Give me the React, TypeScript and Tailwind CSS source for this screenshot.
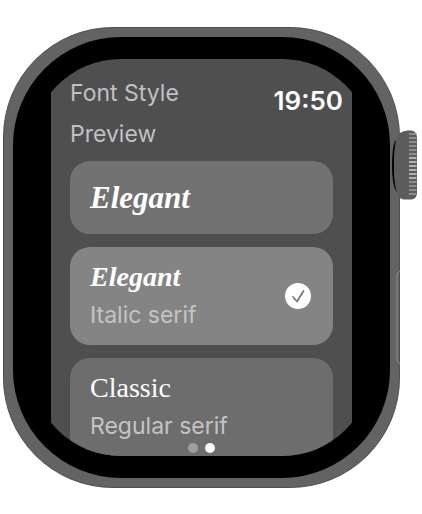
import React, { useState } from 'react';

const styles = [
  { id: 'elegant', name: 'Elegant', detail: 'Italic serif', font: 'font-bold italic' },
  { id: 'classic', name: 'Classic', detail: 'Regular serif', font: 'font-normal' },
];

const ridges = Array.from({ length: 16 }, (_, i) => 13 + i * 4);

function Crown() {
  return (
    <svg className="absolute top-[94px] -right-[18px]" width="30" height="250" viewBox="0 0 30 250" fill="none" aria-hidden="true">
      {/* Crown body, with its shadow against the case */}
      <path d="M8 20C5 27 5 37 5 45s0 18 4 25" stroke="#000" strokeWidth="2" />
      <path d="M12 12c3-2 7-2.500 11-2.500 4 0 6 4 6 8v54c0 4-2 7-6 7h-7c-8 0-10-16-10-33 0-16 1-30 6-33.500Z" fill="#5c5c5c" />
      {ridges.map((y) => (
        <path key={y} d={`M21 ${y}h7.500`} stroke={y > 35 && y < 60 ? '#b0b0b0' : '#8c8c8c'} strokeWidth="2" />
      ))}
      {/* Side button */}
      <path d="M12 150c-2 1-3 3-3 5v82c0 3 1 5 3 6" stroke="#8f8f8f" />
    </svg>
  );
}

export default function App() {
  const [selected, setSelected] = useState('elegant');
  const current = styles.find((s) => s.id === selected)!;

  return (
    <main className="min-h-screen bg-white pt-[27px] pr-[22px] pb-[26px] pl-[3px] font-['Inter',sans-serif]">
      <div className="relative">
        {/* Case */}
        <div className="aspect-[397/461] w-full rounded-[110px] border border-[#505050] bg-[#636363] p-[9px]">
          {/* Bezel */}
          <div className="h-full rounded-[108px] bg-black px-[18px] py-[22px]">
            {/* Rounded glass that cuts the corners of the screen */}
            <div className="h-full overflow-hidden rounded-[90px] px-5">
              <section className="relative h-full overflow-hidden bg-[#4f4f4f] px-[19px] pt-5">
                <time className="absolute top-7 right-[9px] text-[26px] leading-7 font-semibold text-white">19:50</time>

                <div className="flex flex-col gap-[13px]">
                  <h1 className="text-[23px] leading-7 text-[#c0c0c4]">Font Style</h1>
                  <h2 className="text-[23px] leading-7 text-[#c0c0c4]">Preview</h2>

                  <div className="flex h-[73px] shrink-0 items-center rounded-[20px] bg-[#727272] px-5">
                    <p className={`font-['Liberation_Serif',serif] text-[31px] leading-9 text-white ${current.font}`}>{current.name}</p>
                  </div>

                  {styles.map((s) => (
                    <label
                      key={s.id}
                      className={`flex shrink-0 cursor-pointer items-center justify-between rounded-[20px] py-3 pr-[22px] pl-5 ${
                        selected === s.id ? 'bg-[#848484]' : 'bg-[#6d6d6d]'
                      }`}
                    >
                      <span className="flex flex-col gap-0.5">
                        <span className={`font-['Liberation_Serif',serif] text-[28px] leading-9 text-white ${s.font}`}>{s.name}</span>
                        <span className="text-[23px] leading-9 text-[#c4c4c6]">{s.detail}</span>
                      </span>
                      <span className="grid place-items-center">
                        <input
                          type="radio"
                          name="font-style"
                          value={s.id}
                          checked={selected === s.id}
                          onChange={() => setSelected(s.id)}
                          className="col-start-1 row-start-1 size-[26px] appearance-none rounded-full checked:bg-white"
                        />
                        {selected === s.id && (
                          <svg className="pointer-events-none col-start-1 row-start-1" width="26" height="26" viewBox="0 0 26 26" fill="none" aria-hidden="true">
                            <path d="M8 14l4 4.500 6.500-10.500" stroke="#777" strokeWidth="1.800" strokeLinecap="round" strokeLinejoin="round" />
                          </svg>
                        )}
                      </span>
                    </label>
                  ))}
                </div>

                {/* Page dots */}
                <div className="absolute inset-x-0 bottom-[3px] flex justify-center gap-[7px]">
                  <span className="size-2.5 rounded-full bg-[#a0a0a0]" />
                  <span className="size-2.5 rounded-full bg-white" />
                </div>
              </section>
            </div>
          </div>
        </div>
        <Crown />
      </div>
    </main>
  );
}
